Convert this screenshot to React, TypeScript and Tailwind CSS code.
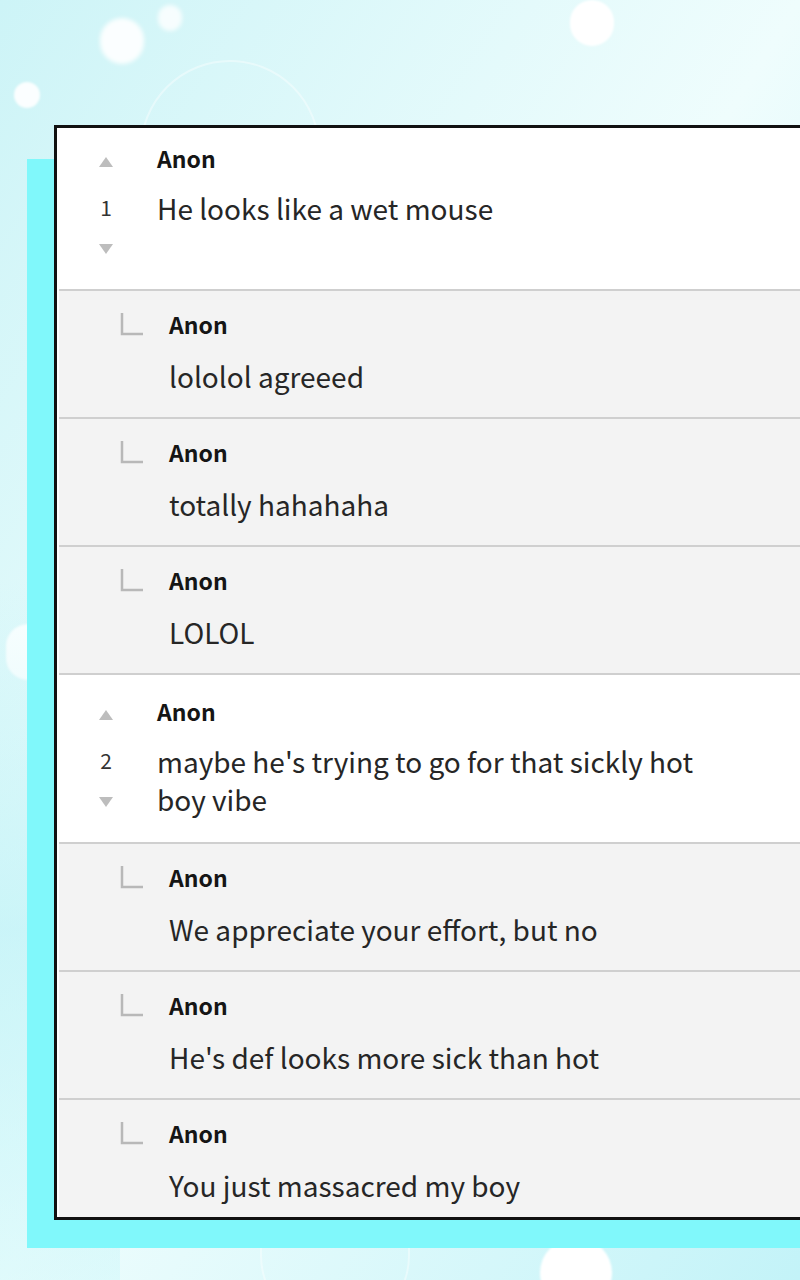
import React from "react";

type Reply = { text: string };
type Thread = { votes: number; text: string; replies: Reply[]; first?: boolean };

const threads: Thread[] = [
  {
    votes: 1,
    text: "He looks like a wet mouse",
    first: true,
    replies: [{ text: "lololol agreeed" }, { text: "totally hahahaha" }, { text: "LOLOL" }],
  },
  {
    votes: 2,
    text: "maybe he's trying to go for that sickly hot boy vibe",
    replies: [
      { text: "We appreciate your effort, but no" },
      { text: "He's def looks more sick than hot" },
      { text: "You just massacred my boy" },
    ],
  },
];

const font = { fontFamily: '"Noto Sans CJK KR", "Noto Sans", sans-serif' };

function Arrow({ down }: { down?: boolean }) {
  return (
    <svg width="14" height="10" viewBox="0 0 14 10" className="block">
      {down ? <path d="M0 0h14L7 10z" fill="#bdbdbd" /> : <path d="M7 0l7 10H0z" fill="#bdbdbd" />}
    </svg>
  );
}

function ReplyMark() {
  return (
    <svg width="24" height="24" viewBox="0 0 24 24" className="block">
      <path d="M2 1v21h21" fill="none" stroke="#b8b8b8" strokeWidth="2.5" />
    </svg>
  );
}

function CommentRow({ t }: { t: Thread }) {
  return (
    <div className={`flex bg-white pl-[27px] ${t.first ? "pt-[16px] pb-[32px]" : "pt-[22px] pb-[24px]"}`}>
      {/* vote column */}
      <div className="flex w-[40px] shrink-0 flex-col items-center">
        <div className="flex h-[36px] items-center">
          <Arrow />
        </div>
        <div className="mt-[9px] flex h-[38px] items-center text-[21px] text-[#333]">{t.votes}</div>
        <div className="mt-[14px] flex h-[16px] items-center">
          <Arrow down />
        </div>
      </div>
      <div className="ml-[31px] w-[560px]">
        <div className="h-[28px] text-[23px] font-bold leading-[28px] text-[#151515]">Anon</div>
        <div className="mt-[17px] text-[28px] leading-[38px] text-[#262626]">{t.text}</div>
      </div>
    </div>
  );
}

function ReplyRow({ r }: { r: Reply }) {
  return (
    <div className="flex bg-[#f3f3f3] pl-[61px] pt-[19px] pb-[22px]">
      <div className="flex h-[28px] w-[24px] shrink-0 items-center">
        <ReplyMark />
      </div>
      <div className="ml-[25px]">
        <div className="h-[28px] text-[23px] font-bold leading-[28px] text-[#151515]">Anon</div>
        <div className="mt-[19px] text-[28px] leading-[38px] text-[#262626]">{r.text}</div>
      </div>
    </div>
  );
}

export default function App() {
  return (
    <div
      className="relative h-[1280px] w-[800px] overflow-hidden bg-gradient-to-br from-[#cdf4f7] via-[#effdfd] to-[#c3f3f8]"
      style={font}
    >
      {/* soft bokeh dots */}
      <div className="absolute left-[100px] top-[18px] h-[46px] w-[44px] rounded-full bg-white/90 blur-[2px]" />
      <div className="absolute left-[158px] top-[5px] h-[26px] w-[24px] rounded-full bg-white/80 blur-[2px]" />
      <div className="absolute left-[14px] top-[82px] h-[26px] w-[26px] rounded-full bg-white/90 blur-[1px]" />
      <div className="absolute left-[570px] top-[0px] h-[46px] w-[44px] rounded-full bg-white blur-[1px]" />
      <div className="absolute left-[6px] top-[624px] h-[56px] w-[44px] rounded-full bg-white/90 blur-[1px]" />
      <div className="absolute left-[540px] top-[1238px] h-[70px] w-[72px] rounded-full bg-white blur-[1px]" />
      <div className="absolute left-[140px] top-[60px] h-[220px] w-[180px] rounded-full border-2 border-white/40" />
      <div className="absolute left-[260px] top-[1130px] h-[200px] w-[150px] rounded-full border-2 border-white/40" />
      <div className="absolute bottom-0 left-0 h-[700px] w-[120px] bg-gradient-to-b from-transparent via-[#b8f1f6]/60 to-[#c8f6f9]/40" />

      <div className="relative ml-[54px] mt-[125px] h-[1095px] w-[800px] overflow-hidden border-[3px] border-r-0 border-[#111] bg-white shadow-[-30px_31px_0_-3px_#80f8fb]">
        <div className="flex flex-col divide-y-2 divide-[#cfcfcf] pl-[2px]">
          {threads.map((t) => (
            <React.Fragment key={t.votes}>
              <CommentRow t={t} />
              {t.replies.map((r) => (
                <ReplyRow key={r.text} r={r} />
              ))}
            </React.Fragment>
          ))}
        </div>
      </div>
    </div>
  );
}
